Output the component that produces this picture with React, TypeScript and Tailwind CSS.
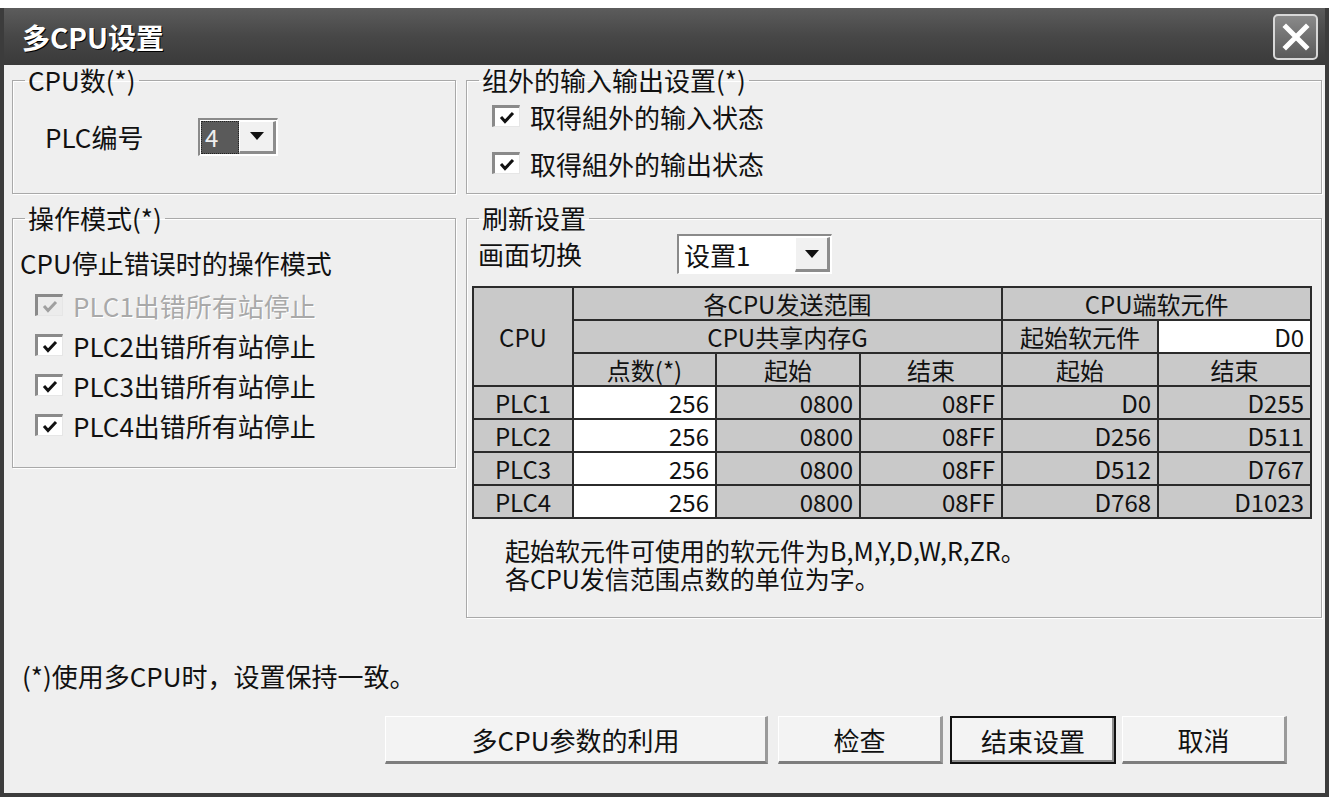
import React from 'react';

const FONT = "font-['Noto_Sans_CJK_SC',sans-serif]";

function Check({ checked = true, disabled = false }: { checked?: boolean; disabled?: boolean }) {
  return (
    <span
      className={`flex h-[22px] w-[28px] shrink-0 items-center justify-center border-l-[3px] border-t-[3px] border-r border-b border-l-[#8a8a8a] border-t-[#8a8a8a] border-r-[#e6e6e6] border-b-[#e6e6e6] ${
        disabled ? 'bg-[#ececec]' : 'bg-white'
      }`}
    >
      {checked && (
        <svg width="16" height="13" viewBox="0 0 16 13">
          <polyline
            points="2,6 6,10.5 14,2"
            fill="none"
            stroke={disabled ? '#a0a0a0' : '#111'}
            strokeWidth="3"
          />
        </svg>
      )}
    </span>
  );
}

function CheckRow({ label, disabled = false }: { label: string; disabled?: boolean }) {
  return (
    <div className="flex h-[30px] items-center gap-[10px]">
      <Check disabled={disabled} />
      <span className={disabled ? 'text-[#a9a9a9] [text-shadow:1px_1px_0_#fff]' : 'text-[#111]'}>{label}</span>
    </div>
  );
}

function Arrow() {
  return (
    <svg width="14" height="8" viewBox="0 0 14 8">
      <polygon points="0,0 14,0 7,8" fill="#111" />
    </svg>
  );
}

function ArrowButton({ className = '' }: { className?: string }) {
  return (
    <span
      className={`flex items-center justify-center bg-[#f1f1f1] border-r-[3px] border-b-[3px] border-r-[#8c8c8c] border-b-[#8c8c8c] border-l border-t border-l-white border-t-white ${className}`}
    >
      <Arrow />
    </span>
  );
}

function Group({
  title,
  className = '',
  children,
}: {
  title: string;
  className?: string;
  children: React.ReactNode;
}) {
  return (
    <fieldset
      className={`border border-[#a9a9a9] shadow-[1px_1px_0_#fff,inset_1px_1px_0_#fff] ${className}`}
    >
      <legend className="ml-[12px] px-[3px] text-[#111] leading-[28px]">{title}</legend>
      {children}
    </fieldset>
  );
}

const cell = 'border-2 border-[#2b2b2b] px-[6px] h-[33px] leading-none';
const gray = 'bg-[#c9c9c9]';

const rows = [
  ['PLC1', '256', '0800', '08FF', 'D0', 'D255'],
  ['PLC2', '256', '0800', '08FF', 'D256', 'D511'],
  ['PLC3', '256', '0800', '08FF', 'D512', 'D767'],
  ['PLC4', '256', '0800', '08FF', 'D768', 'D1023'],
];

function Button({ label, w, primary = false }: { label: string; w: string; primary?: boolean }) {
  return (
    <div
      className={`flex h-[48px] items-center justify-center bg-[#f3f3f3] ${w} ${
        primary
          ? 'border-2 border-[#111] shadow-[inset_-2px_-2px_0_#8c8c8c]'
          : 'border-l border-t border-l-white border-t-white border-r-[3px] border-b-[3px] border-r-[#9a9a9a] border-b-[#7d7d7d]'
      }`}
    >
      {label}
    </div>
  );
}

export default function App() {
  return (
    <div className={`h-[797px] w-[1329px] bg-white pt-[8px] text-[26px] text-[#111] ${FONT}`}>
      <div className="flex h-[789px] flex-col border-x-4 border-b-4 border-[#3c3c3c] bg-[#efefef]">
        {/* title bar */}
        <div className="flex h-[57px] items-center justify-between bg-gradient-to-b from-[#5c5c5c] via-[#474747] to-[#3a3a3a] pl-[18px] pr-[7px]">
          <span className="text-[28px] font-bold leading-none text-white [text-shadow:1px_1px_0_#000]">多CPU设置</span>
          <span className="flex h-[46px] w-[45px] items-center justify-center rounded-[5px] border-2 border-[#d8d8d8] bg-gradient-to-b from-[#8a8a8a] to-[#5a5a5a]">
            <svg width="28" height="28" viewBox="0 0 28 28">
              <path d="M4 4 L24 24 M24 4 L4 24" stroke="#fff" strokeWidth="5" strokeLinecap="square" />
            </svg>
          </span>
        </div>

        {/* body */}
        <div className="flex flex-1 flex-col pl-[8px] pr-[3px] pt-[1px]">
          <div className="flex gap-[10px]">
            {/* left column */}
            <div className="flex w-[444px] flex-col gap-[10px]">
              <Group title="CPU数(*)" className="h-[128px]">
                <div className="mt-[23px] flex items-center pl-[32px]">
                  <span className="w-[153px]">PLC编号</span>
                  <div className="flex h-[38px] w-[80px] items-stretch border-l-2 border-t-2 border-l-[#8a8a8a] border-t-[#8a8a8a] border-r border-b border-r-white border-b-white bg-white p-[1px]">
                    <span className="flex w-[38px] items-center border border-dotted border-[#222] bg-[#5a5a5a] pl-[3px] text-[24px] leading-none text-[#eee]">
                      4
                    </span>
                    <ArrowButton className="flex-1" />
                  </div>
                </div>
              </Group>
              <Group title="操作模式(*)" className="h-[264px]">
                <div className="pl-[7px] pt-[16px] leading-[30px]">CPU停止错误时的操作模式</div>
                <div className="mt-[12px] flex flex-col gap-[10px] pl-[22px]">
                  <CheckRow label="PLC1出错所有站停止" disabled />
                  <CheckRow label="PLC2出错所有站停止" />
                  <CheckRow label="PLC3出错所有站停止" />
                  <CheckRow label="PLC4出错所有站停止" />
                </div>
              </Group>
            </div>

            {/* right column */}
            <div className="flex w-[856px] flex-col gap-[10px]">
              <Group title="组外的输入输出设置(*)" className="h-[128px]">
                <div className="flex flex-col gap-[17px] pl-[25px] pt-[7px]">
                  <CheckRow label="取得組外的输入状态" />
                  <CheckRow label="取得組外的输出状态" />
                </div>
              </Group>
              <Group title="刷新设置" className="h-[414px]">
                <div className="pl-[5px]">
                  <div className="mt-[2px] flex items-center">
                    <span className="ml-[6px] w-[199px] leading-[30px]">画面切换</span>
                    <div className="flex h-[40px] w-[155px] items-stretch border-l-2 border-t-2 border-l-[#8a8a8a] border-t-[#8a8a8a] border-r border-b border-r-white border-b-white bg-white p-[1px]">
                      <span className="flex flex-1 items-center pl-[4px] leading-none">设置1</span>
                      <ArrowButton className="w-[35px]" />
                    </div>
                  </div>

                  <table className="mt-[12px] w-[838px] table-fixed border-collapse text-[24px]">
                    <colgroup>
                      <col className="w-[100px]" />
                      <col className="w-[143px]" />
                      <col className="w-[144px]" />
                      <col className="w-[142px]" />
                      <col className="w-[156px]" />
                      <col className="w-[153px]" />
                    </colgroup>
                    <tbody>
                      <tr>
                        <td rowSpan={3} className={`${cell} ${gray} text-center`}>CPU</td>
                        <td colSpan={3} className={`${cell} ${gray} text-center`}>各CPU发送范围</td>
                        <td colSpan={2} className={`${cell} ${gray} text-center`}>CPU端软元件</td>
                      </tr>
                      <tr>
                        <td colSpan={3} className={`${cell} ${gray} text-center`}>CPU共享内存G</td>
                        <td className={`${cell} ${gray} text-center`}>起始软元件</td>
                        <td className={`${cell} bg-white text-right`}>D0</td>
                      </tr>
                      <tr>
                        <td className={`${cell} ${gray} text-center`}>点数(*)</td>
                        <td className={`${cell} ${gray} text-center`}>起始</td>
                        <td className={`${cell} ${gray} text-center`}>结束</td>
                        <td className={`${cell} ${gray} text-center`}>起始</td>
                        <td className={`${cell} ${gray} text-center`}>结束</td>
                      </tr>
                      {rows.map((r) => (
                        <tr key={r[0]}>
                          <td className={`${cell} ${gray} text-center`}>{r[0]}</td>
                          <td className={`${cell} bg-white text-right`}>{r[1]}</td>
                          <td className={`${cell} ${gray} text-right`}>{r[2]}</td>
                          <td className={`${cell} ${gray} text-right`}>{r[3]}</td>
                          <td className={`${cell} ${gray} text-right`}>{r[4]}</td>
                          <td className={`${cell} ${gray} text-right`}>{r[5]}</td>
                        </tr>
                      ))}
                    </tbody>
                  </table>

                  <div className="mt-[17px] pl-[33px] text-[25px] leading-[28px]">
                    <div>起始软元件可使用的软元件为B,M,Y,D,W,R,ZR。</div>
                    <div>各CPU发信范围点数的单位为字。</div>
                  </div>
                </div>
              </Group>
            </div>
          </div>

          {/* footer */}
          <div className="ml-[10px] mt-[43px] leading-[30px]">(*)使用多CPU时，设置保持一致。</div>
          <div className="mt-[25px] flex justify-end pr-[35px]">
            <Button label="多CPU参数的利用" w="w-[383px]" />
            <div className="w-[10px]" />
            <Button label="检查" w="w-[165px]" />
            <div className="w-[7px]" />
            <Button label="结束设置" w="w-[166px]" primary />
            <div className="w-[6px]" />
            <Button label="取消" w="w-[165px]" />
          </div>
        </div>
      </div>
    </div>
  );
}
